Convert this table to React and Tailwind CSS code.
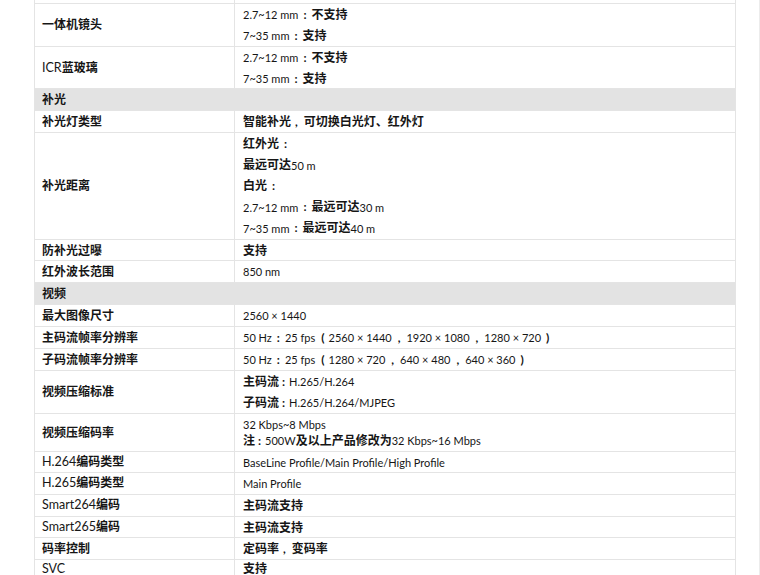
import React from "react";

const FONT = { fontFamily: '"Lato", "Noto Sans CJK SC", sans-serif' };

function C({ children }) {
  return <span className="font-semibold text-[12px]">{children}</span>;
}
function L({ children }) {
  return <span className="text-[11px]">{children}</span>;
}
function P({ children, cls }) {
  return <span className={`font-bold text-[12px] ${cls || "mx-[5px]"}`}>{children}</span>;
}

function Line({ children, h }) {
  return <div className={`flex items-center whitespace-pre ${h || "h-[21px]"}`}>{children}</div>;
}

function Row({ h, label, children }) {
  return (
    <div className={`grid grid-cols-[200px_501px] border-b border-[#e4e4e4] ${h}`}>
      <div className="flex items-center pl-[7px] border-r border-[#e4e4e4] text-[12px] font-semibold">
        {label}
      </div>
      <div className="flex flex-col justify-center pl-[8px] leading-none">{children}</div>
    </div>
  );
}

function Header({ children, h }) {
  return (
    <div className={`flex items-center pl-[7px] bg-[#e3e3e3] text-[12px] font-bold border-b border-[#e4e4e4] ${h}`}>
      {children}
    </div>
  );
}

export default function App() {
  return (
    <div className="w-[760px] h-[575px] overflow-hidden bg-white border-r border-[#ececec] text-[#161616]" style={FONT}>
      <div className="ml-[34px] w-[702px] border-l border-r border-[#e4e4e4]">
        <div className="grid grid-cols-[200px_501px] border-b border-[#e4e4e4] h-[4px]">
          <div className="border-r border-[#e4e4e4]"></div>
          <div></div>
        </div>
        <Row h="h-[43px]" label="一体机镜头">
          <Line><L>2.7~12 mm</L><P>:</P><C>不支持</C></Line>
          <Line><L>7~35 mm</L><P>:</P><C>支持</C></Line>
        </Row>
        <Row h="h-[42px]" label={<span><span className="font-normal text-[12.5px]">ICR</span>蓝玻璃</span>}>
          <Line><L>2.7~12 mm</L><P>:</P><C>不支持</C></Line>
          <Line><L>7~35 mm</L><P>:</P><C>支持</C></Line>
        </Row>
        <Header h="h-[22px]">补光</Header>
        <Row h="h-[22px]" label="补光灯类型">
          <Line><C>智能补光</C><P cls="ml-[4px] mr-[6px]">,</P><C>可切换白光灯、红外灯</C></Line>
        </Row>
        <Row h="h-[107px]" label="补光距离">
          <Line><C>红外光</C><P cls="ml-[5px]">:</P></Line>
          <Line><C>最远可达</C><L>50 m</L></Line>
          <Line><C>白光</C><P cls="ml-[5px]">:</P></Line>
          <Line><L>2.7~12 mm</L><P>:</P><C>最远可达</C><L>30 m</L></Line>
          <Line><L>7~35 mm</L><P>:</P><C>最远可达</C><L>40 m</L></Line>
        </Row>
        <Row h="h-[21px]" label="防补光过曝">
          <Line><C>支持</C></Line>
        </Row>
        <Row h="h-[22px]" label="红外波长范围">
          <Line><L>850 nm</L></Line>
        </Row>
        <Header h="h-[22px]">视频</Header>
        <Row h="h-[22px]" label="最大图像尺寸">
          <Line><L>2560 × 1440</L></Line>
        </Row>
        <Row h="h-[22px]" label="主码流帧率分辨率">
          <Line><L>50 Hz</L><P>:</P><L>25 fps</L><P cls="ml-[6px] mr-[4px]">(</P><L>2560 × 1440</L><P cls="mx-[6px]">,</P><L>1920 × 1080</L><P cls="mx-[6px]">,</P><L>1280 × 720</L><P cls="ml-[5px]">)</P></Line>
        </Row>
        <Row h="h-[22px]" label="子码流帧率分辨率">
          <Line><L>50 Hz</L><P>:</P><L>25 fps</L><P cls="ml-[6px] mr-[4px]">(</P><L>1280 × 720</L><P cls="mx-[6px]">,</P><L>640 × 480</L><P cls="mx-[6px]">,</P><L>640 × 360</L><P cls="ml-[5px]">)</P></Line>
        </Row>
        <Row h="h-[43px]" label="视频压缩标准">
          <Line><C>主码流</C><P cls="ml-[3px] mr-[4px]">:</P><L>H.265/H.264</L></Line>
          <Line><C>子码流</C><P cls="ml-[3px] mr-[4px]">:</P><L>H.265/H.264/MJPEG</L></Line>
        </Row>
        <Row h="h-[38px]" label="视频压缩码率">
          <Line h="h-[16px]"><L>32 Kbps~8 Mbps</L></Line>
          <Line h="h-[17px]"><C>注</C><P cls="ml-[3px] mr-[4px]">:</P><L>500W</L><C>及以上产品修改为</C><L>32 Kbps~16 Mbps</L></Line>
        </Row>
        <Row h="h-[21px]" label={<span><span className="font-normal text-[12.5px]">H.264</span>编码类型</span>}>
          <Line><L>BaseLine Profile/Main Profile/High Profile</L></Line>
        </Row>
        <Row h="h-[22px]" label={<span><span className="font-normal text-[12.5px]">H.265</span>编码类型</span>}>
          <Line><L>Main Profile</L></Line>
        </Row>
        <Row h="h-[22px]" label={<span><span className="font-normal text-[12.5px]">Smart264</span>编码</span>}>
          <Line><C>主码流支持</C></Line>
        </Row>
        <Row h="h-[21px]" label={<span><span className="font-normal text-[12.5px]">Smart265</span>编码</span>}>
          <Line><C>主码流支持</C></Line>
        </Row>
        <Row h="h-[22px]" label="码率控制">
          <Line><C>定码率</C><P cls="ml-[4px] mr-[6px]">,</P><C>变码率</C></Line>
        </Row>
        <div className="grid grid-cols-[200px_501px] h-[16px] items-end">
          <div className="flex items-end pl-[7px] border-r border-[#e4e4e4] h-full text-[12.5px] leading-[14px]">SVC</div>
          <div className="flex items-end pl-[8px] h-full"><span className="font-semibold text-[12px] leading-[14px]">支持</span></div>
        </div>
      </div>
    </div>
  );
}
